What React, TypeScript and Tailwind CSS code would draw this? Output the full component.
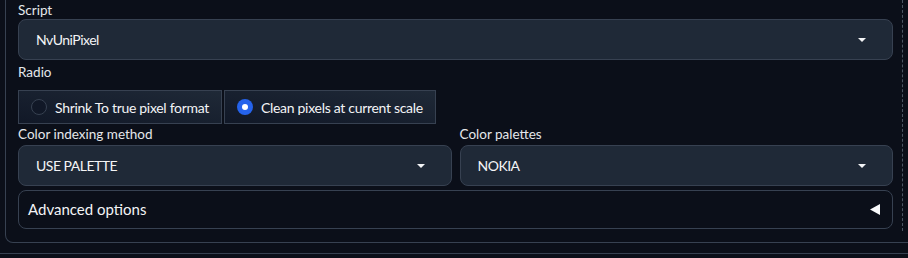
import { ReactNode } from "react";

const Caret = () => (
  <svg width="10" height="6" viewBox="0 0 10 6" className="shrink-0">
    <path d="M1 1h8L5 5z" fill="#f3f4f6" />
  </svg>
);

const Label = ({ children, className = "" }: { children: ReactNode; className?: string }) => (
  <div className={`text-[13.5px] leading-[20px] text-[#e5e7eb] ${className}`}>{children}</div>
);

const Dropdown = ({ value }: { value: string }) => (
  <div className="h-[41px] flex items-center justify-between pl-[17px] pr-[25px] rounded-lg border border-[#374151] bg-[#1f2937] text-[14px] tracking-[-0.5px] text-[#f3f4f6]">
    <span>{value}</span>
    <Caret />
  </div>
);

const RadioOption = ({ label, checked }: { label: string; checked?: boolean }) => (
  <label className="h-[34px] flex items-center gap-[8px] pl-[12px] pr-[12px] border border-[#374151] bg-gradient-to-tr from-[#111827] to-[#1f2937] text-[14px] tracking-[-0.3px] text-[#f3f4f6]">
    {checked ? (
      <span className="w-4 h-4 rounded-full bg-[#2563eb] flex items-center justify-center">
        <span className="w-[6px] h-[6px] rounded-full bg-white" />
      </span>
    ) : (
      <span className="w-4 h-4 rounded-full border border-[#374151] bg-[#111827]" />
    )}
    <span>{label}</span>
  </label>
);

export default function App() {
  return (
    <div
      className="w-[908px] h-[258px] overflow-hidden bg-[#0b0f19]"
      style={{ fontFamily: "Lato, 'Noto Sans', sans-serif" }}
    >
      <div className="ml-[5px] w-[920px] border-l border-b border-r border-[#374151] rounded-b-lg pl-3 pb-[11px]">
        <div className="flex items-stretch">
          {/* Form column */}
          <div className="w-[875px] flex flex-col pb-[2px]">
            <Label className="h-[19px] leading-[19px]">Script</Label>
            <Dropdown value="NvUniPixel" />

            <Label className="mt-[2px] mb-2">Radio</Label>
            <div className="flex gap-[2px]">
              <RadioOption label="Shrink To true pixel format" />
              <RadioOption label="Clean pixels at current scale" checked />
            </div>

            <div className="flex gap-2">
              <div className="flex-1 flex flex-col">
                <Label className="h-[21px] leading-[21px]">Color indexing method</Label>
                <Dropdown value="USE PALETTE" />
              </div>
              <div className="flex-1 flex flex-col">
                <Label className="h-[21px] leading-[21px]">Color palettes</Label>
                <Dropdown value="NOKIA" />
              </div>
            </div>

            {/* Advanced options accordion */}
            <div className="mt-1 h-[39px] flex items-center justify-between pl-[9px] pr-[12px] rounded-lg border border-[#374151] bg-[#0b0f19] text-[15px] text-[#f3f4f6]">
              <span>Advanced options</span>
              <svg width="10" height="11" viewBox="0 0 10 11">
                <path d="M0 5.5L10 0v11z" fill="#f9fafb" />
              </svg>
            </div>
          </div>
          <div className="ml-[9px] border-l border-dashed border-[#4b5563]" />
        </div>
      </div>
      <div className="mt-[10px] border-t border-[#374151]" />
    </div>
  );
}
